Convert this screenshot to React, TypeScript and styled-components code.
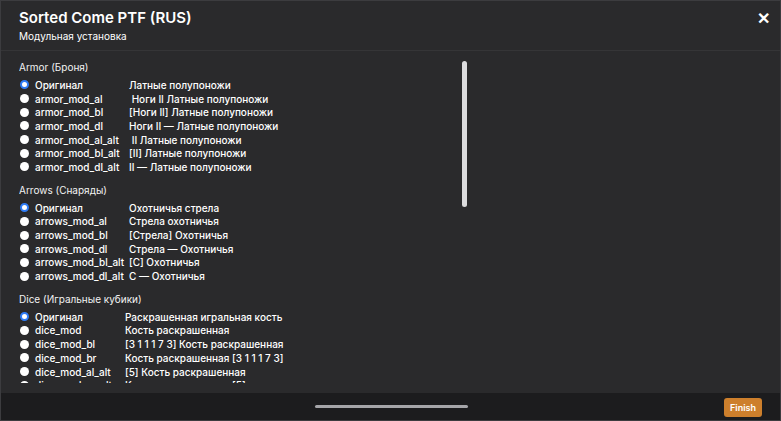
import React from 'react';
import styled, {createGlobalStyle} from 'styled-components';

const GlobalStyle = createGlobalStyle`
  html, body {
    margin: 0;
    padding: 0;
    background: #1d1d1f;
  }
  body {
    font-family: Inter, "Liberation Sans", "Noto Sans", sans-serif;
  }
`

type Row = { id: string, label: string, desc: string, checked?: boolean }
type Section = { title: string, labelWidth: number, rows: Row[] }

const sections: Section[] = [
  {
    title: 'Armor (Броня)', labelWidth: 94, rows: [
      {id: 'a0', label: 'Оригинал', desc: 'Латные полупоножи', checked: true},
      {id: 'a1', label: 'armor_mod_al', desc: '\u00a0Ноги II Латные полупоножи'},
      {id: 'a2', label: 'armor_mod_bl', desc: '[Ноги II] Латные полупоножи'},
      {id: 'a3', label: 'armor_mod_dl', desc: 'Ноги II — Латные полупоножи'},
      {id: 'a4', label: 'armor_mod_al_alt', desc: '\u00a0II Латные полупоножи'},
      {id: 'a5', label: 'armor_mod_bl_alt', desc: '[II] Латные полупоножи'},
      {id: 'a6', label: 'armor_mod_dl_alt', desc: 'II — Латные полупоножи'},
    ]
  },
  {
    title: 'Arrows (Снаряды)', labelWidth: 94, rows: [
      {id: 'r0', label: 'Оригинал', desc: 'Охотничья стрела', checked: true},
      {id: 'r1', label: 'arrows_mod_al', desc: 'Стрела охотничья'},
      {id: 'r2', label: 'arrows_mod_bl', desc: '[Стрела] Охотничья'},
      {id: 'r3', label: 'arrows_mod_dl', desc: 'Стрела — Охотничья'},
      {id: 'r4', label: 'arrows_mod_bl_alt', desc: '[С] Охотничья'},
      {id: 'r5', label: 'arrows_mod_dl_alt', desc: 'С — Охотничья'},
    ]
  },
  {
    title: 'Dice (Игральные кубики)', labelWidth: 90, rows: [
      {id: 'd0', label: 'Оригинал', desc: 'Раскрашенная игральная кость', checked: true},
      {id: 'd1', label: 'dice_mod', desc: 'Кость раскрашенная'},
      {id: 'd2', label: 'dice_mod_bl', desc: '[3 1 1 1 7 3] Кость раскрашенная'},
      {id: 'd3', label: 'dice_mod_br', desc: 'Кость раскрашенная [3 1 1 1 7 3]'},
      {id: 'd4', label: 'dice_mod_al_alt', desc: '[5] Кость раскрашенная'},
      {id: 'd5', label: 'dice_mod_ar_alt', desc: 'Кость раскрашенная [5]'},
    ]
  },
]

const Dialog = styled.div`
  box-sizing: border-box;
  width: 781px;
  height: 421px;
  display: flex;
  flex-direction: column;
  background: #2a2a2c;
  border: 1px solid #3c3c3f;
  color: #fff;
  overflow: hidden;
`
const Header = styled.header`
  display: flex;
  justify-content: space-between;
  align-items: flex-start;
  padding: 8px 10px 0 18px;
  height: 50px;
  box-sizing: border-box;
  border-bottom: 1px solid #353537;
`
const Title = styled.h1`
  margin: 0;
  font-size: 15px;
  font-weight: 600;
  line-height: 18px;
`
const Subtitle = styled.div`
  font-size: 10px;
  line-height: 14px;
  margin-top: 2px;
`
const Close = styled.button`
  border: 0;
  background: none;
  color: #fff;
  font-size: 16px;
  font-weight: 700;
  line-height: 1;
  padding: 0;
  margin-top: 2px;
  cursor: pointer;
`
const Body = styled.div`
  flex: 1;
  display: flex;
  padding: 9px 0 10px 18px;
  min-height: 0;
`
const Scroll = styled.div`
  flex: 1;
  overflow: hidden;
`
const Track = styled.div`
  width: 6px;
  margin-right: 312px;
  flex-shrink: 0;
  padding-top: 1px;
`
const Thumb = styled.div`
  width: 5px;
  height: 146px;
  border-radius: 3px;
  background: #dcdcde;
`
const Group = styled.section`
  margin-bottom: 9px;
`
const GroupTitle = styled.div`
  font-size: 10px;
  line-height: 14px;
  margin-bottom: 4px;
  color: #f2f2f2;
`
const Option = styled.label<{ $labelWidth: number }>`
  display: grid;
  grid-template-columns: 16px ${p => p.$labelWidth}px auto;
  align-items: center;
  height: 13.7px;
  font-size: 10px;
  font-weight: 500;
  color: #fff;
  white-space: nowrap;
`
const Radio = styled.span<{ $checked?: boolean }>`
  width: 9px;
  height: 9px;
  margin-left: 1px;
  border-radius: 50%;
  box-sizing: border-box;
  background: #fff;
  border: ${p => p.$checked ? '2.5px solid #2f7cf6' : '0'};
`
const Footer = styled.footer`
  height: 27px;
  flex-shrink: 0;
  background: #1c1c1e;
  display: flex;
  align-items: center;
  padding: 0 18px 0 314px;
`
const HScroll = styled.div`
  width: 153px;
  height: 3px;
  border-radius: 2px;
  background: #a5a5a9;
  margin-right: auto;
`
const Finish = styled.button`
  background: #cd7f2c;
  color: #fff;
  border: 0;
  border-radius: 3px;
  font-family: inherit;
  font-size: 9px;
  font-weight: 600;
  height: 19px;
  padding: 0 6px;
  margin-top: 2px;
`

function App() {
  return (
    <>
      <GlobalStyle/>
      <Dialog>
        <Header>
          <div>
            <Title>Sorted Come PTF (RUS)</Title>
            <Subtitle>Модульная установка</Subtitle>
          </div>
          <Close aria-label="close">✕</Close>
        </Header>
        <Body>
          <Scroll>
            {sections.map(s =>
              <Group key={s.title}>
                <GroupTitle>{s.title}</GroupTitle>
                {s.rows.map(r =>
                  <Option key={r.id} $labelWidth={s.labelWidth}>
                    <Radio $checked={r.checked}/>
                    <span>{r.label}</span>
                    <span>{r.desc}</span>
                  </Option>
                )}
              </Group>
            )}
          </Scroll>
          <Track><Thumb/></Track>
        </Body>
        <Footer>
          <HScroll/>
          <Finish>Finish</Finish>
        </Footer>
      </Dialog>
    </>
  )
}

export default App;
